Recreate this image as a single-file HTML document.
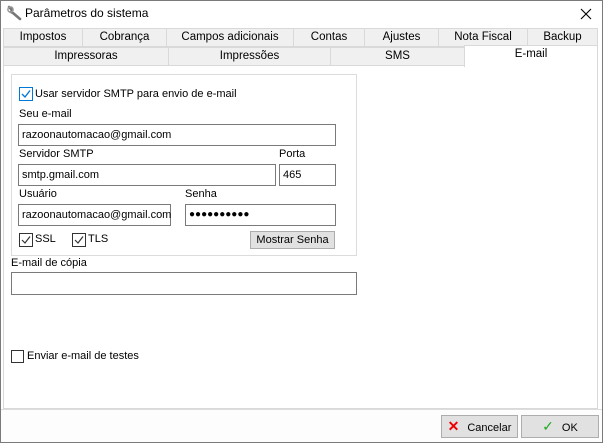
<!DOCTYPE html>
<html><head><meta charset="utf-8"><style>
*{box-sizing:border-box;margin:0;padding:0}
body{width:603px;height:443px;position:relative;overflow:hidden;background:#fff;font-family:"Liberation Sans",Arial,sans-serif;font-size:11px;color:#000}
.a{position:absolute}
.win{left:0;top:0;width:603px;height:443px;border:1px solid #7a7a7a}
.tab{position:absolute;height:19px;background:#f0f0f0;border:1px solid #d9d9d9;text-align:center;line-height:17px;font-size:11.5px}
.panel{left:3px;top:65px;width:595px;height:344px;border:1px solid #d9d9d9;background:#fff}
.inp{position:absolute;border:1px solid #7a7a7a;background:#fff;height:22px;line-height:20px;padding-left:3px;font-size:11px}
.lbl{position:absolute;font-size:11px}
.cb{position:absolute;width:13px;height:13px;border:1px solid #333;background:#fff}
.btn{position:absolute;height:22px;background:#e1e1e1;border:1px solid #adadad;font-size:11px;line-height:20px;text-align:center}
</style></head><body>
<div class="a win"></div>
<svg class="a" style="left:6px;top:5px" width="16" height="16" viewBox="0 0 16 16"><path d="M3 2 L6 5 L5 7 L7 8 L14 14" stroke="#777" stroke-width="2.6" fill="none" stroke-linecap="round"/><circle cx="4.5" cy="4.5" r="2.6" fill="none" stroke="#999" stroke-width="1.5"/></svg>
<div class="a" style="left:25px;top:6px;font-size:12px">Parâmetros do sistema</div>
<svg class="a" style="left:580px;top:8px" width="12" height="12"><path d="M1 1L11 11M11 1L1 11" stroke="#000" stroke-width="1.1"/></svg>

<div class="tab" style="left:3px;top:28px;width:80px">Impostos</div>
<div class="tab" style="left:82px;top:28px;width:85px">Cobrança</div>
<div class="tab" style="left:166px;top:28px;width:128px">Campos adicionais</div>
<div class="tab" style="left:293px;top:28px;width:72px">Contas</div>
<div class="tab" style="left:364px;top:28px;width:75px">Ajustes</div>
<div class="tab" style="left:438px;top:28px;width:90px">Nota Fiscal</div>
<div class="tab" style="left:527px;top:28px;width:71px">Backup</div>
<div class="tab" style="left:3px;top:47px;width:166px">Impressoras</div>
<div class="tab" style="left:168px;top:47px;width:163px">Impressões</div>
<div class="tab" style="left:330px;top:47px;width:135px">SMS</div>
<div class="a panel"></div>
<div class="tab" style="left:464px;top:45px;width:134px;height:22px;background:#fff;border-bottom:none;line-height:17px">E-mail</div>

<div class="a" style="left:11px;top:74px;width:346px;height:182px;border:1px solid #dcdcdc"></div>
<svg class="a" style="left:19px;top:87px" width="14" height="14"><rect x="0.5" y="0.5" width="13" height="13" fill="#fff" stroke="#0078d7"/><path d="M3 7L6 10L11 3.5" stroke="#0078d7" stroke-width="1.4" fill="none"/></svg>
<div class="lbl" style="left:35px;top:88px">Usar servidor SMTP para envio de e-mail</div>
<div class="lbl" style="left:19px;top:108px">Seu e-mail</div>
<div class="inp" style="left:18px;top:124px;width:318px">razoonautomacao@gmail.com</div>
<div class="lbl" style="left:19px;top:148px">Servidor SMTP</div>
<div class="lbl" style="left:279px;top:148px">Porta</div>
<div class="inp" style="left:18px;top:164px;width:258px">smtp.gmail.com</div>
<div class="inp" style="left:279px;top:164px;width:57px">465</div>
<div class="lbl" style="left:19px;top:188px">Usuário</div>
<div class="lbl" style="left:185px;top:188px">Senha</div>
<div class="inp" style="left:18px;top:204px;width:153px">razoonautomacao@gmail.com</div>
<div class="inp" style="left:185px;top:204px;width:151px;font-size:10px;font-weight:bold">●●●●●●●●●●</div>
<svg class="a" style="left:19px;top:233px" width="14" height="14"><rect x="0.5" y="0.5" width="13" height="13" fill="#fff" stroke="#333"/><path d="M3 7L6 10L11 3.5" stroke="#333" stroke-width="1.2" fill="none"/></svg>
<div class="lbl" style="left:35px;top:233px">SSL</div>
<svg class="a" style="left:72px;top:233px" width="14" height="14"><rect x="0.5" y="0.5" width="13" height="13" fill="#fff" stroke="#333"/><path d="M3 7L6 10L11 3.5" stroke="#333" stroke-width="1.2" fill="none"/></svg>
<div class="lbl" style="left:88px;top:233px">TLS</div>
<div class="btn" style="left:250px;top:231px;width:85px;height:18px;line-height:16px">Mostrar Senha</div>

<div class="lbl" style="left:11px;top:257px">E-mail de cópia</div>
<div class="inp" style="left:11px;top:272px;width:346px;height:23px"></div>
<div class="cb" style="left:11px;top:350px"></div>
<div class="lbl" style="left:27px;top:350px">Enviar e-mail de testes</div>

<div class="a" style="left:1px;top:409px;width:601px;height:33px;background:#fdfdfd;border-top:1px solid #ddd"></div>
<div class="btn" style="left:441px;top:415px;width:77px;height:23px;line-height:21px"><span style="color:#e00;font-weight:bold;font-size:14px;margin-right:8px">✕</span>Cancelar</div>
<div class="btn" style="left:521px;top:415px;width:78px;height:23px;line-height:21px"><span style="color:#2a2;font-size:14px;margin-right:8px">✓</span>OK</div>
</body></html>
